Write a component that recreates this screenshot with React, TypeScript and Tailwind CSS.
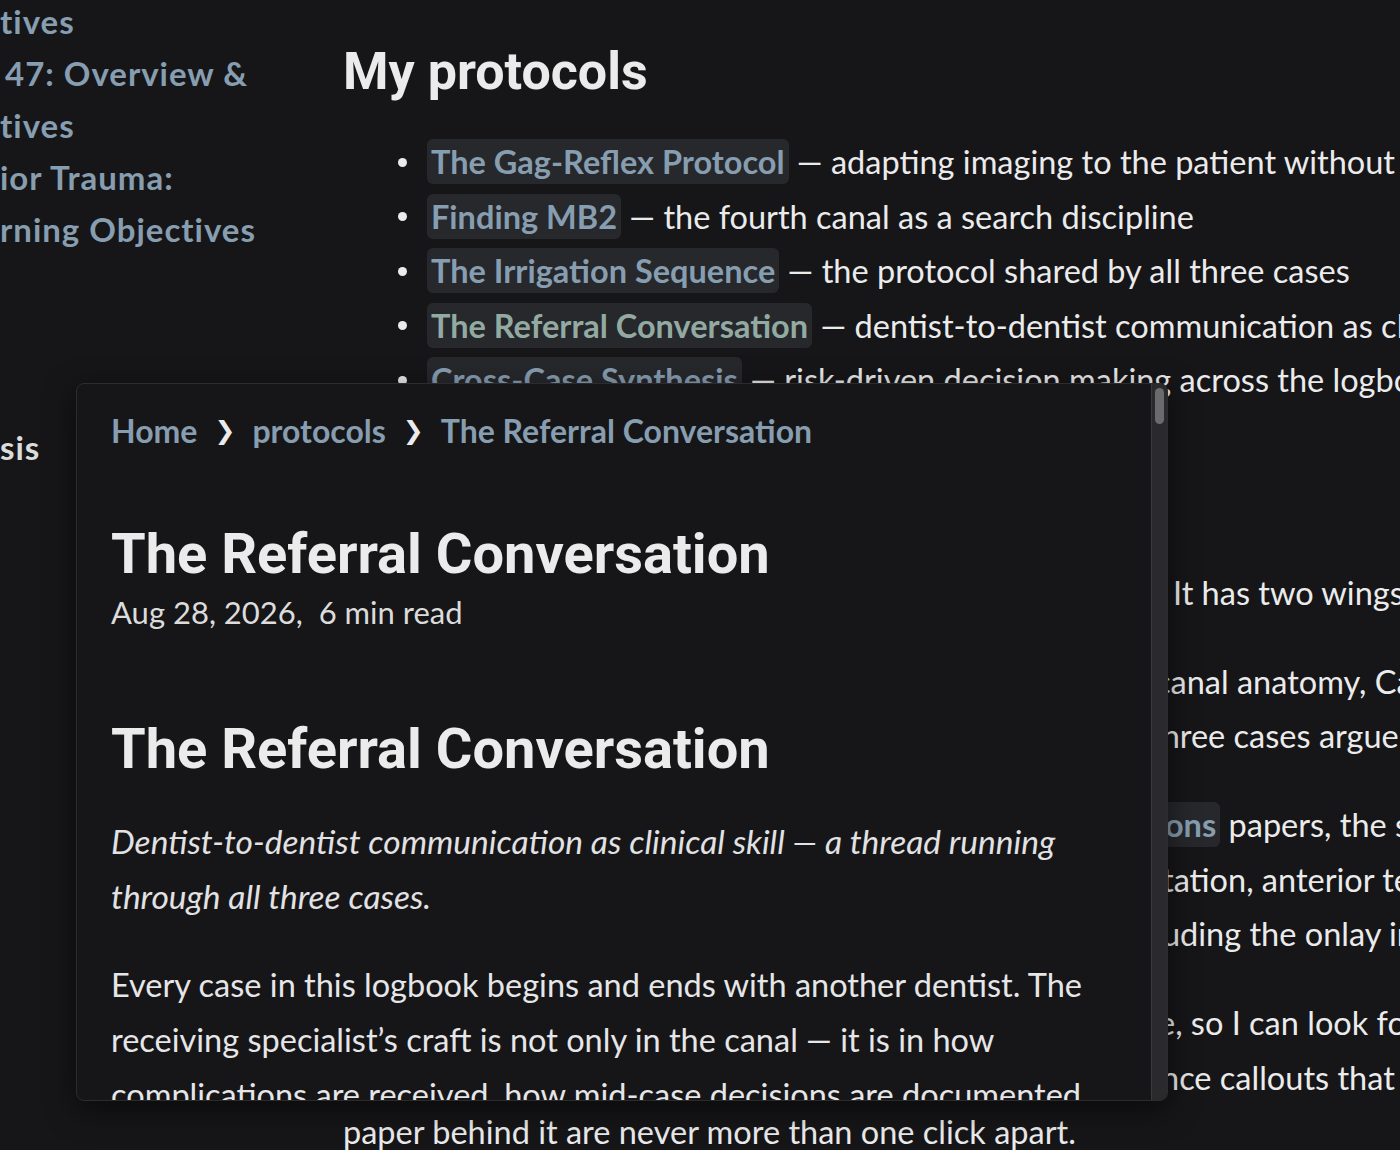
import React from "react";

const body = "font-['Lato','Noto_Sans',sans-serif]";
const head = "font-['Roboto','Inter',sans-serif]";

function Link({ children, tone = "sec" }: { children: React.ReactNode; tone?: "sec" | "ter" }) {
  return (
    <span
      className={
        "rounded-[6px] bg-[#26282c] px-[4px] py-[3px] font-bold " +
        (tone === "ter" ? "text-[#93aaa2]" : "text-[#879db0]")
      }
    >
      {children}
    </span>
  );
}

function HiddenLine({ w, hidden, children }: { w: string; hidden: React.ReactNode; children: React.ReactNode }) {
  return (
    <div className="whitespace-nowrap">
      <span className={"inline-block overflow-hidden whitespace-nowrap align-top " + w}>{hidden}</span>
      {children}
    </div>
  );
}

const items: { link: string; desc: string; tone?: "sec" | "ter" }[] = [
  { link: "The Gag-Reflex Protocol", desc: "adapting imaging to the patient without compromising diagnosis" },
  { link: "Finding MB2", desc: "the fourth canal as a search discipline" },
  { link: "The Irrigation Sequence", desc: "the protocol shared by all three cases" },
  { link: "The Referral Conversation", desc: "dentist-to-dentist communication as clinical skill", tone: "ter" },
  { link: "Cross-Case Synthesis", desc: "risk-driven decision making across the logbook" },
];

export default function App() {
  return (
    <div className={"relative h-[1150px] w-[1400px] overflow-hidden bg-[#161618] text-[#ebebec] " + body}>
      <div className="flex">
        {/* left sidebar (scrolled / clipped) */}
        <aside className="w-[343px] shrink-0 -mt-[5px] text-[33px] font-bold leading-[52px] tracking-[0.03em] text-[#879db0]">
          <div>tives</div>
          <div className="pl-[5px]">47: Overview &amp;</div>
          <div>tives</div>
          <div>ior Trauma:</div>
          <div>rning Objectives</div>
          <div className="mt-[166px] text-[#dcdcdc]">sis</div>
        </aside>

        {/* main article */}
        <main className="min-w-0 flex-1 pt-[42px] text-[32.5px] leading-[54.5px]">
          <h1 className={"text-[52px] font-bold leading-[60px] text-[#ebebec] " + head}>My protocols</h1>
          <ul className="mt-[33px] pl-[55px]">
            {items.map((it) => (
              <li key={it.link} className="flex items-center whitespace-nowrap">
                <span className="mr-[20px] h-[9px] w-[9px] shrink-0 rounded-full bg-[#ebebec]" />
                <span>
                  <Link tone={it.tone}>{it.link}</Link> — {it.desc}
                </span>
              </li>
            ))}
          </ul>
          <h2 className={"mt-[30px] mb-[68px] text-[38px] font-bold leading-[60px] " + head}>How to read</h2>
          <p>
            <HiddenLine w="w-[830px]" hidden="This logbook is built around three cases and">
              It has two wings: the cases and the protocols.
            </HiddenLine>
          </p>
          <p className="mt-[34.5px]">
            <HiddenLine w="w-[812px]" hidden="The first case concerns a lower molar with">
              canal anatomy, Case 2 a gagging patient, Case 3 trauma.
            </HiddenLine>
            <HiddenLine w="w-[807px]" hidden="Taken together, the">
              three cases argue for a single way of working.
            </HiddenLine>
          </p>
          <p className="mt-[34.5px]">
            <HiddenLine w="w-[797px]" hidden="Alongside the case write-ups and the">
              <Link>tions</Link> papers, the site collects protocols.
            </HiddenLine>
            <HiddenLine w="w-[819px]" hidden="They cover imaging, irrigation, referral">
              tation, anterior teeth and restorative planning,
            </HiddenLine>
            <HiddenLine w="w-[819px]" hidden="and the final restorative decisions,">
              uding the onlay in the third case.
            </HiddenLine>
          </p>
          <p className="mt-[34.5px]">
            <HiddenLine w="w-[815px]" hidden="Each protocol links back to the cases that">
              e, so I can look for the pattern rather than the case.
            </HiddenLine>
            <HiddenLine w="w-[818px]" hidden="Each case links forward to the protocols and">
              nce callouts that support every decision made.
            </HiddenLine>
            <div className="whitespace-nowrap">paper behind it are never more than one click apart.</div>
          </p>
        </main>
      </div>

      {/* hover popover preview */}
      <div className="absolute left-[76px] top-[383px] flex h-[718px] w-[1092px] overflow-hidden rounded-[8px] border border-[#2c2c30] bg-[#161618] shadow-[0_8px_30px_rgba(0,0,0,0.55)]">
        <div className="min-w-0 flex-1 overflow-hidden px-[34px] pt-[25px]">
          <nav className="flex items-center whitespace-nowrap text-[32px] font-bold leading-[44px] text-[#879db0]">
            <span>Home</span>
            <span className="mx-[17px] text-[25px] text-[#ebebec] font-['DejaVu_Sans',sans-serif]">❯</span>
            <span>protocols</span>
            <span className="mx-[17px] text-[25px] text-[#ebebec] font-['DejaVu_Sans',sans-serif]">❯</span>
            <span>The Referral Conversation</span>
          </nav>
          <h1 className={"mt-[71px] text-[56px] font-bold leading-[60px] " + head}>
            The Referral Conversation
          </h1>
          <div className="mt-[6px] text-[31px] leading-[44px] text-[#dcdcdc]">Aug 28, 2026,&nbsp; 6 min read</div>
          <h1 className={"mt-[85px] text-[56px] font-bold leading-[60px] " + head}>
            The Referral Conversation
          </h1>
          <p className="mt-[34.5px] text-[33.5px] italic leading-[55px] text-[#e2e2e4]">
            <span className="block whitespace-nowrap">
              Dentist-to-dentist communication as clinical skill — a thread running
            </span>
            <span className="block whitespace-nowrap">through all three cases.</span>
          </p>
          <p className="mt-[33px] text-[32.5px] leading-[55px] text-[#e6e6e8]">
            <span className="block whitespace-nowrap">
              Every case in this logbook begins and ends with another dentist. The
            </span>
            <span className="block whitespace-nowrap">
              receiving specialist’s craft is not only in the canal — it is in how
            </span>
            <span className="block whitespace-nowrap">
              complications are received, how mid-case decisions are documented,
            </span>
          </p>
        </div>
        {/* scrollbar */}
        <div className="flex w-[16px] shrink-0 justify-center border-l border-[#3a3a3e] bg-[#2a2a2d] pt-[4px]">
          <div className="h-[36px] w-[9px] rounded-full bg-[#6b6b6e]" />
        </div>
      </div>
    </div>
  );
}
